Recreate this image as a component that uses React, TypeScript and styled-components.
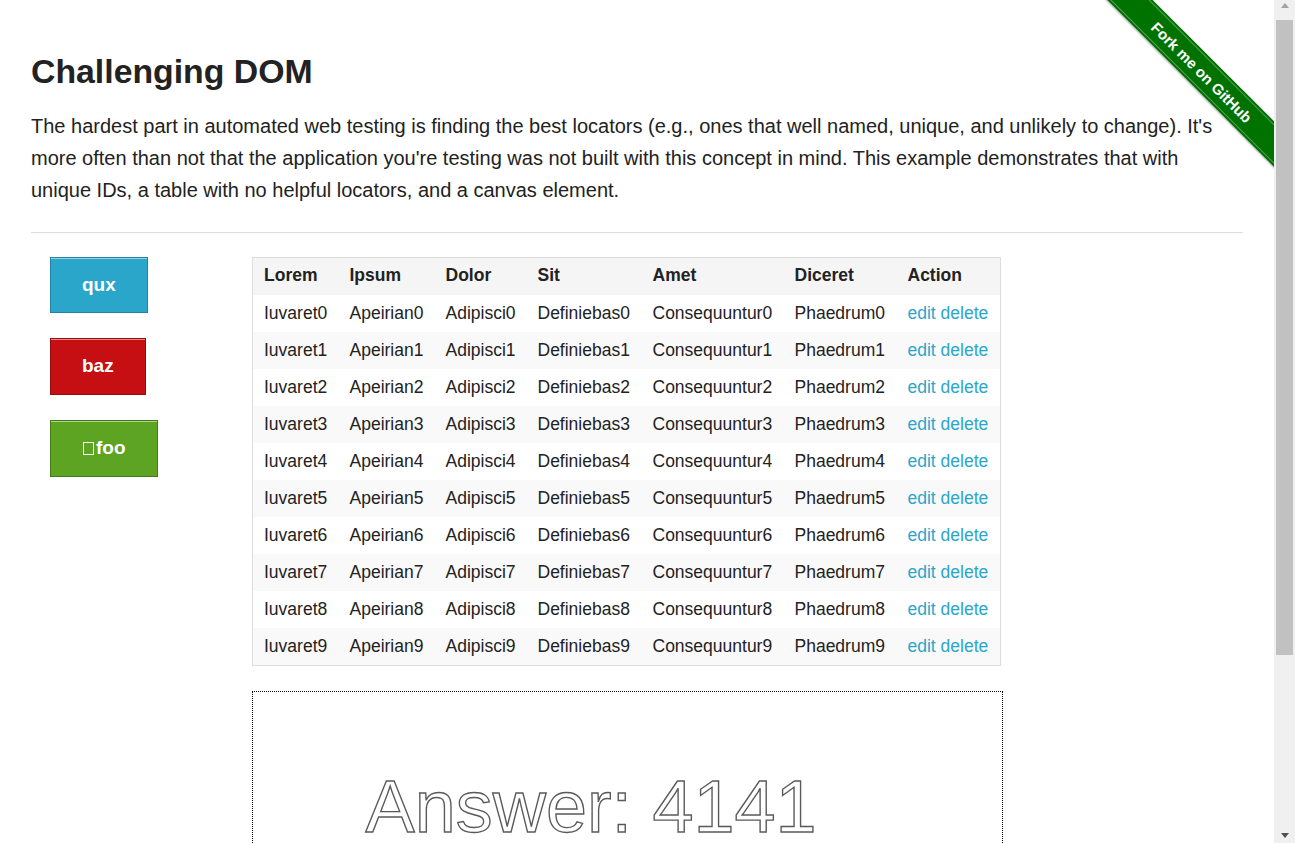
import React from "react";
import styled, { createGlobalStyle } from "styled-components";

const GlobalStyle = createGlobalStyle`
  html, body { margin: 0; padding: 0; background: #fff; }
  body {
    font-family: "Liberation Sans", Arial, Helvetica, sans-serif;
    color: #222;
  }
`;

const Page = styled.div`
  position: relative;
  padding-top: 51px;
  margin-right: 21px;
`;

const Container = styled.div`
  width: 1212px;
  margin-left: 31px;
  padding-bottom: 40px;
`;

const Title = styled.h3`
  margin: 0 0 18.6px;
  font-size: 33.8px;
  line-height: 40.8px;
  font-weight: bold;
  color: #222;
`;

const Lead = styled.p`
  margin: 0;
  font-size: 20px;
  line-height: 32px;
  color: #222;
`;

const Rule = styled.hr`
  margin: 25.6px 0 24px;
  border: 0;
  border-top: 1px solid #ddd;
  height: 0;
`;

const Content = styled.div`
  display: grid;
  grid-template-columns: 221px 1fr;
`;

const ButtonColumn = styled.div`
  display: flex;
  flex-direction: column;
  align-items: flex-start;
  gap: 25px;
  padding-left: 19px;
`;

const tones = {
  primary: { bg: "#2ba6cb", border: "#2284a1", h: 54 },
  alert: { bg: "#c60f13", border: "#970b0e", h: 55 },
  success: { bg: "#5da423", border: "#457a1a", h: 55 },
};

const Button = styled.a<{ $tone: keyof typeof tones }>`
  display: inline-flex;
  align-items: center;
  height: ${(p) => tones[p.$tone].h}px;
  padding: 0 31px;
  background: ${(p) => tones[p.$tone].bg};
  border: 1px solid ${(p) => tones[p.$tone].border};
  box-shadow: inset 0 1px 0 rgba(255, 255, 255, 0.5);
  color: #fff;
  font-size: 19px;
  font-weight: bold;
  text-decoration: none;
  cursor: pointer;
`;

const Tofu = styled.span`
  display: inline-block;
  box-sizing: border-box;
  width: 11px;
  height: 13px;
  border: 1px solid #fff;
  margin: 0 2px 0 1px;
`;

const MainColumn = styled.div`
  display: flex;
  flex-direction: column;
  align-items: flex-start;
  gap: 25px;
`;

const Table = styled.table`
  border-collapse: collapse;
  table-layout: fixed;
  width: 749px;
  border: 1px solid #ddd;
  background: #fff;
  font-size: 17.5px;
`;

const Col = styled.col<{ $w: number }>`
  width: ${(p) => p.$w}px;
`;

const HeadCell = styled.th`
  background: #f5f5f5;
  text-align: left;
  font-weight: bold;
  color: #222;
  padding: 8px 0 10px 11px;
  line-height: 19px;
  white-space: nowrap;
`;

const Row = styled.tr<{ $even: boolean }>`
  background: ${(p) => (p.$even ? "#f9f9f9" : "#fff")};
`;

const Cell = styled.td`
  padding: 9px 0 9px 11px;
  line-height: 19px;
  color: #222;
  white-space: nowrap;
`;

const Link = styled.a`
  color: #2ba6cb;
  text-decoration: none;
  cursor: pointer;
`;

const CanvasFrame = styled.div`
  width: 749px;
  height: 250px;
  border: 1px dotted #000;
`;

const Footer = styled.div`
  width: 1212px;
  margin-left: 31px;
  padding-bottom: 4px;
`;

const FooterText = styled.div`
  text-align: center;
  font-size: 20px;
  line-height: 32px;
`;

const RibbonBox = styled.div`
  position: absolute;
  top: 0;
  right: 0;
  width: 170px;
  height: 170px;
  overflow: hidden;
  pointer-events: none;
`;

const Ribbon = styled.a`
  position: absolute;
  left: -52px;
  top: 56px;
  width: 300px;
  height: 32px;
  transform: rotate(45deg);
  background: #007200;
  color: #fff;
  font-size: 15px;
  font-weight: bold;
  display: flex;
  align-items: center;
  justify-content: center;
  text-decoration: none;
  box-shadow: 0 1px 2px rgba(0, 0, 0, 0.35);
  &::before {
    content: "";
    position: absolute;
    left: 0;
    right: 0;
    top: 2px;
    bottom: 2px;
    border-top: 1px solid rgba(255, 255, 255, 0.35);
    border-bottom: 1px solid rgba(255, 255, 255, 0.35);
  }
`;

/* Drawn scrollbar of the captured browser window */
const ScrollTrack = styled.div`
  position: fixed;
  top: 0;
  right: 0;
  bottom: 0;
  width: 21px;
  background: #f0f0f0;
  display: flex;
  flex-direction: column;
  align-items: center;
`;

const ScrollArrow = styled.div<{ $down?: boolean }>`
  height: 17px;
  width: 17px;
  display: flex;
  align-items: center;
  justify-content: center;
  &::after {
    content: "";
    width: 0;
    height: 0;
    border-left: 4.5px solid transparent;
    border-right: 4.5px solid transparent;
    ${(p) =>
      p.$down
        ? "border-top: 5px solid #505050; margin-top: 2px;"
        : "border-bottom: 5px solid #a3a3a3; margin-top: -6px;"}
  }
`;

const ScrollBody = styled.div`
  flex: 1;
  width: 17px;
  padding-top: 3px;
`;

const ScrollThumb = styled.div`
  height: 635px;
  background: #c1c1c1;
`;

const headers = ["Lorem", "Ipsum", "Dolor", "Sit", "Amet", "Diceret", "Action"];
const widths = [86, 96, 92, 115, 142, 113, 104];
const words = ["Iuvaret", "Apeirian", "Adipisci", "Definiebas", "Consequuntur", "Phaedrum"];

export default function App() {
  return (
    <Page>
      <GlobalStyle />
      <Container>
        <Title>Challenging DOM</Title>
        <Lead>
          The hardest part in automated web testing is finding the best locators (e.g., ones that
          well named, unique, and unlikely to change). It's more often than not that the application
          you're testing was not built with this concept in mind. This example demonstrates that
          with unique IDs, a table with no helpful locators, and a canvas element.
        </Lead>
        <Rule />
        <Content>
          <ButtonColumn>
            <Button $tone="primary">qux</Button>
            <Button $tone="alert">baz</Button>
            <Button $tone="success">
              <Tofu />
              foo
            </Button>
          </ButtonColumn>
          <MainColumn>
            <Table>
              <colgroup>
                {widths.map((w, i) => (
                  <Col key={i} $w={w} />
                ))}
              </colgroup>
              <thead>
                <tr>
                  {headers.map((h) => (
                    <HeadCell key={h}>{h}</HeadCell>
                  ))}
                </tr>
              </thead>
              <tbody>
                {Array.from({ length: 10 }, (_, r) => (
                  <Row key={r} $even={r % 2 === 1}>
                    {words.map((w) => (
                      <Cell key={w}>
                        {w}
                        {r}
                      </Cell>
                    ))}
                    <Cell>
                      <Link>edit</Link> <Link>delete</Link>
                    </Cell>
                  </Row>
                ))}
              </tbody>
            </Table>
            <CanvasFrame>
              <svg width="749" height="250" viewBox="0 0 599 200" preserveAspectRatio="none">
                <text
                  x="90"
                  y="112"
                  fontFamily="'Liberation Sans', Arial, sans-serif"
                  fontSize="59"
                  fill="none"
                  stroke="#5a5a5a"
                  strokeWidth="1.1"
                >
                  Answer: 4141
                </text>
              </svg>
            </CanvasFrame>
          </MainColumn>
        </Content>
      </Container>
      <Footer>
        <Rule />
        <FooterText>
          Powered by <Link>Elemental Selenium</Link>
        </FooterText>
      </Footer>
      <RibbonBox>
        <Ribbon>Fork me on GitHub</Ribbon>
      </RibbonBox>
      <ScrollTrack>
        <ScrollArrow />
        <ScrollBody>
          <ScrollThumb />
        </ScrollBody>
        <ScrollArrow $down />
      </ScrollTrack>
    </Page>
  );
}
